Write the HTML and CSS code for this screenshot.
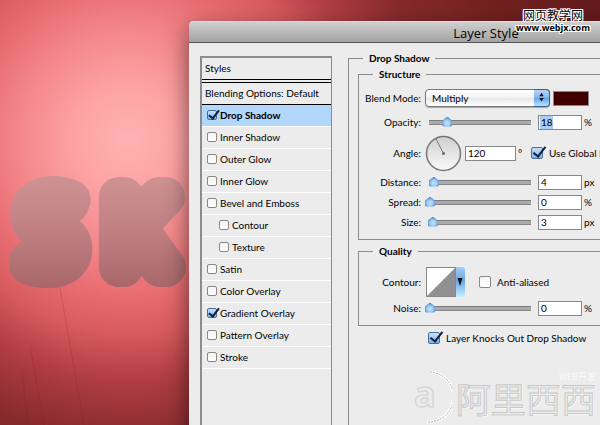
FILE: index.html
```
<!DOCTYPE html>
<html lang="en">
<head>
    <meta charset="UTF-8">
    <meta name="viewport" content="width=device-width, initial-scale=1.0">
    <title>Layer Style</title>
    <link rel="stylesheet" href="styles.css">
</head>
<body>
    <main class="desktop">
        <svg class="artwork" width="200" height="425" viewBox="0 0 200 425">
            <defs>
                <linearGradient id="letters" gradientUnits="userSpaceOnUse" x1="0" y1="176" x2="0" y2="288">
                    <stop offset="0" stop-color="#cf9292"/>
                    <stop offset="0.5" stop-color="#c08082"/>
                    <stop offset="1" stop-color="#a86668"/>
                </linearGradient>
            </defs>
            <path class="scratch" d="M60 288 L70 345 L84 425 M22 370 L28 425 M30 345 L44 425"/>
            <text class="art-text" x="24 109" y="267">SK</text>
        </svg>

        <section class="window">
            <h1 class="titlebar">Layer Style</h1>

            <div class="panes">
                <div class="style-list">
                    <div class="list-head">Styles</div>
                    <div class="list-blending">Blending Options: Default</div>
                    <label class="item selected"><input type="checkbox" checked>Drop Shadow</label>
                    <label class="item"><input type="checkbox">Inner Shadow</label>
                    <label class="item"><input type="checkbox">Outer Glow</label>
                    <label class="item"><input type="checkbox">Inner Glow</label>
                    <label class="item"><input type="checkbox">Bevel and Emboss</label>
                    <label class="item sub"><input type="checkbox">Contour</label>
                    <label class="item sub"><input type="checkbox">Texture</label>
                    <label class="item"><input type="checkbox">Satin</label>
                    <label class="item"><input type="checkbox">Color Overlay</label>
                    <label class="item"><input type="checkbox" checked>Gradient Overlay</label>
                    <label class="item"><input type="checkbox">Pattern Overlay</label>
                    <label class="item"><input type="checkbox">Stroke</label>
                </div>

                <fieldset class="settings">
                    <legend>Drop Shadow</legend>

                    <fieldset class="group">
                        <legend>Structure</legend>
                        <div class="row row-blend">
                            <label class="name" for="blend">Blend Mode:</label>
                            <div class="select-wrap">
                                <select id="blend"><option>Multiply</option></select>
                                <svg class="arrows" width="16" height="18" viewBox="0 0 16 18"><path d="M8 3 L10.500 7 H5.500Z M8 13 L10.500 9 H5.500Z" fill="#111"/></svg>
                            </div>
                            <button class="swatch" type="button" aria-label="Shadow color"></button>
                        </div>
                        <div class="row row-opacity">
                            <label class="name" for="opacity">Opacity:</label>
                            <input type="range" value="18" aria-label="Opacity">
                            <input class="field marked" type="text" id="opacity" value="18">
                            <span class="unit">%</span>
                        </div>
                        <div class="row row-angle">
                            <label class="name" for="angle">Angle:</label>
                            <svg class="dial" width="37" height="37" viewBox="0 0 37 37">
                                <defs>
                                    <linearGradient id="dial" x1="0" y1="0" x2="0" y2="1">
                                        <stop offset="0" stop-color="#cfcfcf"/>
                                        <stop offset="1" stop-color="#fafafa"/>
                                    </linearGradient>
                                </defs>
                                <circle cx="18.500" cy="18.500" r="17" fill="url(#dial)" stroke="#777" stroke-width="1.500"/>
                                <path d="M18.500 18.500 L11 4" stroke="#777"/>
                                <circle cx="18.500" cy="18.500" r="1.500" fill="#666"/>
                            </svg>
                            <input class="field wide" type="text" id="angle" value="120">
                            <span class="degree">°</span>
                            <label class="check"><input type="checkbox" checked>Use Global Light</label>
                        </div>
                        <div class="row">
                            <label class="name" for="distance">Distance:</label>
                            <input type="range" value="4" aria-label="Distance">
                            <input class="field" type="text" id="distance" value="4">
                            <span class="unit">px</span>
                        </div>
                        <div class="row">
                            <label class="name" for="spread">Spread:</label>
                            <input type="range" value="0" aria-label="Spread">
                            <input class="field" type="text" id="spread" value="0">
                            <span class="unit">%</span>
                        </div>
                        <div class="row">
                            <label class="name" for="size">Size:</label>
                            <input type="range" value="3" aria-label="Size">
                            <input class="field" type="text" id="size" value="3">
                            <span class="unit">px</span>
                        </div>
                    </fieldset>

                    <fieldset class="group quality">
                        <legend>Quality</legend>
                        <div class="row row-contour">
                            <label class="name" for="contour">Contour:</label>
                            <button class="contour" type="button" id="contour">
                                <svg width="39" height="30" viewBox="0 0 39 30">
                                    <defs>
                                        <linearGradient id="aqua" x1="0" y1="0" x2="0" y2="1">
                                            <stop offset="0" stop-color="#a4cdf5"/>
                                            <stop offset="0.45" stop-color="#69a8e8"/>
                                            <stop offset="1" stop-color="#c4ecff"/>
                                        </linearGradient>
                                    </defs>
                                    <path d="M29 0 H36 Q39 0 39 3 V27 Q39 30 36 30 H29Z" fill="url(#aqua)"/>
                                    <rect x="0.500" y="0.500" width="29" height="29" fill="#fff" stroke="#888"/>
                                    <path d="M1 29 L29 1 V29Z" fill="#909090"/>
                                    <path d="M31.500 11 H36.500 L34 19Z" fill="#111"/>
                                </svg>
                            </button>
                            <label class="check"><input type="checkbox">Anti-aliased</label>
                        </div>
                        <div class="row">
                            <label class="name" for="noise">Noise:</label>
                            <input type="range" value="0" aria-label="Noise">
                            <input class="field" type="text" id="noise" value="0">
                            <span class="unit">%</span>
                        </div>
                    </fieldset>

                    <label class="check knockout"><input type="checkbox" checked>Layer Knocks Out Drop Shadow</label>
                </fieldset>
            </div>
        </section>

        <div class="site-mark">
            <div class="site-name">网页教学网</div>
            <div class="site-url">www.webjx.com</div>
        </div>

        <div class="brand-mark">
            <svg width="42" height="56" viewBox="0 0 42 56">
                <path d="M20 2 A25 25 0 0 1 17 52" fill="none" stroke="#fff" stroke-width="3"/>
                <path d="M20 2 A25 25 0 0 1 17 52" fill="none" stroke="#aaa" stroke-dasharray="2 1"/>
                <text class="brand-a" x="4" y="37">a</text>
            </svg>
            <div class="brand-words">
                <div class="brand-small">WEB开发</div>
                <div class="brand-name">阿里西西</div>
            </div>
        </div>
    </main>
</body>
</html>
```
FILE: styles.css
```
:root {
    --panel: #ececec;
    --line: #8c8c8c;
    --text: #000;
}

* {
    box-sizing: border-box;
}

body {
    margin: 0;
    font-family: Lato, "Open Sans", sans-serif;
    font-size: 10px;
    line-height: 16px;
    color: var(--text);
}

.desktop {
    position: relative;
    min-height: 100vh;
    overflow: hidden;
    background: radial-gradient(circle at 128px 140px, #ffb2b2 0, #fda2a4 55px, #f4878a 110px, #e86d71 155px, #d65a5e 195px, #b03e42 240px, #872a2e 300px, #70201f 400px, #641a1c 500px);
}

.artwork {
    position: absolute;
    left: 0;
    top: 0;
}

.scratch {
    fill: none;
    stroke: #7a2024;
    stroke-opacity: 0.2;
}

.art-text {
    font-family: "Open Sans", sans-serif;
    font-size: 98px;
    font-weight: 300;
    fill: url(#letters);
    stroke: url(#letters);
    stroke-width: 40px;
    stroke-linejoin: round;
}

/* dialog window */

.window {
    position: absolute;
    left: 189px;
    top: 21px;
    bottom: -40px;
    width: 594px;
    background: var(--panel);
    border-radius: 5px 5px 0 0;
    box-shadow: 0 8px 24px rgba(0,0,0,0.55);
    display: flex;
    flex-direction: column;
}

.titlebar {
    margin: 0;
    height: 22px;
    font-family: "Open Sans", sans-serif;
    font-size: 13px;
    font-weight: normal;
    line-height: 22px;
    text-align: center;
    background: linear-gradient(#cfcfcf, #a2a2a2);
    border-top: 1px solid #e0e0e0;
    border-bottom: 1px solid #555;
    border-radius: 5px 5px 0 0;
}

.panes {
    flex: 1;
    display: flex;
    gap: 16px;
    padding: 7px 11px 0;
}

.style-list {
    width: 132px;
    margin-top: 6px;
    border: 1px solid var(--line);
    border-width: 2px 1px 0 2px;
}

.list-head,
.list-blending {
    height: 22px;
    padding-left: 3px;
    line-height: 20px;
    border-bottom: 1px solid #000;
}

.list-head {
    height: 25px;
    line-height: 20px;
    border-bottom: 4px double #000;
}

.item {
    display: flex;
    align-items: center;
    gap: 3px;
    height: 22px;
    padding: 0 0 2px 5px;
    border-bottom: 1px solid #fff;
}

.sub {
    padding-left: 17px;
}

.selected {
    background: #b3d6fb;
    font-weight: bold;
}

input[type="checkbox"] {
    appearance: none;
    flex: none;
    position: relative;
    width: 10px;
    height: 10px;
    margin: 0;
    border: 1px solid #888;
    border-radius: 2px;
    background: linear-gradient(#f4f4f4, #fff);
}

input[type="checkbox"]:checked {
    border-color: #4a6f9c;
    background: linear-gradient(#c8e0f8, #7ab4ee);
}

input[type="checkbox"]:checked::after {
    content: "";
    position: absolute;
    left: 3px;
    top: -3px;
    width: 4px;
    height: 9px;
    border: solid #10203c;
    border-width: 0 2px 2px 0;
    transform: rotate(38deg);
}

/* right side */

fieldset {
    min-width: 0;
    margin: 0;
    border: 1px solid var(--line);
}

legend {
    margin-left: 14px;
    padding: 0 6px;
    font-weight: bold;
}

.settings {
    flex: 1;
    padding: 0 9px;
}

.settings > legend {
    margin-left: 5px;
}

.group {
    padding: 6px 0 7px;
}

.quality {
    margin-top: 3px;
}

.row {
    display: flex;
    align-items: center;
    height: 20px;
}

.row-blend {
    margin-bottom: 4px;
}

.row-opacity {
    margin-bottom: 2px;
}

.row-angle {
    height: 38px;
}

.row-contour {
    height: 33px;
}

.name {
    width: 62px;
    margin-right: 4px;
    text-align: right;
}

.select-wrap {
    position: relative;
    width: 125px;
    height: 18px;
}

select {
    appearance: none;
    width: 100%;
    height: 18px;
    padding: 0 6px;
    font: inherit;
    color: inherit;
    border: 1px solid #777;
    border-radius: 4px;
    background: linear-gradient(#fff, #f2f2f2 50%, #e6e6e6 50%, #fff);
    box-shadow: 0 1px 1px rgba(0,0,0,0.3);
}

.arrows {
    position: absolute;
    right: 0;
    top: 0;
    border: 1px solid #3a5f94;
    border-left: 0;
    border-radius: 0 4px 4px 0;
    background: linear-gradient(#b4d4f6, #8abaf0 45%, #62a2e6 50%, #bce6ff);
}

.swatch {
    width: 36px;
    height: 15px;
    margin-left: 3px;
    padding: 0;
    border: 1px solid #888;
    background: #400000;
}

input[type="range"] {
    appearance: none;
    width: 106px;
    height: 12px;
    margin: 0;
    background: transparent;
}

input[type="range"]::-webkit-slider-runnable-track {
    height: 5px;
    background: linear-gradient(#7c7c7c 1px, #aaa 1px, #aaa 4px, #868686 4px) 4px 0 / 102px 5px no-repeat;
}

input[type="range"]::-webkit-slider-thumb {
    appearance: none;
    width: 10px;
    height: 10px;
    margin-top: -3px;
    background: radial-gradient(circle at 5px 6px, #c4e4ff 0, #9ccbf8 3px, #4f82bc 6px);
    clip-path: polygon(50% 0, 100% 40%, 100% 90%, 90% 100%, 10% 100%, 0 90%, 0 40%);
}

.field {
    width: 44px;
    height: 15px;
    margin-left: 7px;
    padding: 0 2px;
    font: inherit;
    line-height: 13px;
    color: inherit;
    background: #fff;
    border: 1px solid #888;
    border-radius: 0;
}

.marked {
    background: linear-gradient(#a9cdf4, #a9cdf4) 1px 0 / 13px 13px no-repeat #fff;
}

.wide {
    width: 51px;
    margin-left: 3px;
}

.unit {
    margin-left: 2px;
}

.degree {
    width: 5px;
    margin: 0 8px 0 2px;
}

.check {
    display: flex;
    align-items: center;
    gap: 6px;
    white-space: nowrap;
}

.check input[type="checkbox"] {
    width: 12px;
    height: 12px;
}

.check input[type="checkbox"]:checked::after {
    left: 4px;
    top: -4px;
    width: 5px;
    height: 11px;
}

.contour {
    width: 39px;
    height: 30px;
    margin: 0 14px 0 1px;
    padding: 0;
    border: 0;
    background: none;
}

.contour svg {
    display: block;
}

.knockout {
    height: 20px;
    margin: 2px 0 0 70px;
}

/* marks laid over the window */

.site-mark {
    position: absolute;
    right: 10px;
    top: 7px;
    text-align: center;
    color: #000;
    text-shadow: 1px 0 #fff, -1px 0 #fff, 0 1px #fff, 0 -1px #fff, 1px 1px #fff, -1px -1px #fff, 1px -1px #fff, -1px 1px #fff;
}

.site-name {
    font-family: "Noto Sans CJK SC", sans-serif;
    font-size: 12px;
}

.site-url {
    font-family: "Open Sans", sans-serif;
    font-size: 9px;
    font-weight: bold;
    line-height: 10px;
}

.brand-mark {
    position: absolute;
    right: 4px;
    top: 370px;
    display: flex;
    gap: 4px;
}

.brand-words {
    font-family: "Noto Sans CJK SC", sans-serif;
}

.brand-small {
    font-size: 9px;
    line-height: 14px;
    text-align: right;
    color: #fafafa;
}

.brand-name {
    font-size: 35px;
    line-height: 28px;
    color: var(--panel);
    -webkit-text-stroke: 1px #c8c8c8;
    text-shadow: 1px 1px #fff;
}

.brand-a {
    font-family: "Open Sans", sans-serif;
    font-size: 36px;
    font-weight: bold;
    fill: var(--panel);
    stroke: #d0d0d0;
}
```
